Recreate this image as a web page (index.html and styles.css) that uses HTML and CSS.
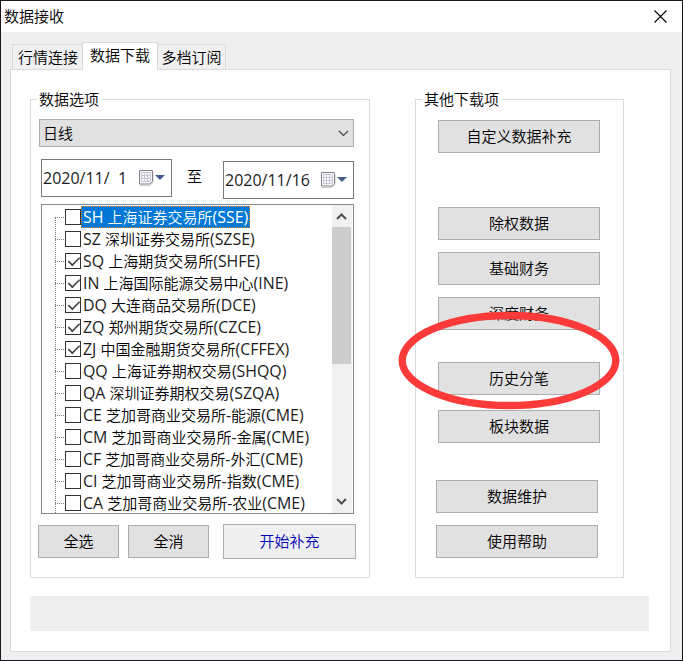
FILE: index.html
```html
<!DOCTYPE html>
<html lang="zh-CN">
<head>
<meta charset="utf-8">
<title>数据接收</title>
<link rel="stylesheet" href="styles.css">
</head>
<body>
<div class="window">
  <header class="titlebar">
    <span>数据接收</span>
    <svg class="close" width="13" height="13" viewBox="0 0 13 13"><path d="M.5.5l12 12M12.5.5l-12 12"/></svg>
  </header>
  <nav class="tabs">
    <div class="tab tab-first">行情连接</div>
    <div class="tab tab-active">数据下载</div>
    <div class="tab tab-last">多档订阅</div>
  </nav>
  <main class="panel">
    <div class="groups">
      <fieldset class="group group-data">
        <legend>数据选项</legend>
        <div class="combo"><span>日线</span><svg width="11" height="7" viewBox="0 0 11 7"><path d="M1 1l4.5 4.5L10 1"/></svg></div>
        <div class="dates">
          <div class="date"><span class="date-text">2020/11/&nbsp; 1</span><svg class="cal" width="27" height="18" viewBox="0 0 27 18"><path class="shadow" d="M2 16.5h10l3-3V3"/><path class="sheet" d="M1.5 1.5h13v11l-2.500 2.500h-10.500z"/><path class="cells" d="M3.500 3.500h9v9h-9zM6.500 3.500v9M9.500 3.500v9M3.500 6.500h9M3.500 9.500h9"/><path class="arrow" d="M17 6h10l-5 5z"/></svg></div>
          <span class="to">至</span>
          <div class="date date-end"><span class="date-text">2020/11/16</span><svg class="cal" width="27" height="18" viewBox="0 0 27 18"><path class="shadow" d="M2 16.500h10l3-3V3"/><path class="sheet" d="M1.500 1.500h13v11l-2.500 2.500h-10.500z"/><path class="cells" d="M3.500 3.500h9v9h-9zM6.500 3.500v9M9.500 3.500v9M3.500 6.500h9M3.500 9.500h9"/><path class="arrow" d="M17 6h10l-5 5z"/></svg></div>
        </div>
        <div class="list">
          <ul class="tree">
            <li><i class="branch first"></i><i class="box"></i><span class="label selected"><b>SH </b>上海证券交易所<b>(SSE)</b></span></li>
            <li><i class="branch"></i><i class="box"></i><span class="label"><b>SZ </b>深圳证券交易所<b>(SZSE)</b></span></li>
            <li><i class="branch"></i><i class="box checked"></i><span class="label"><b>SQ </b>上海期货交易所<b>(SHFE)</b></span></li>
            <li><i class="branch"></i><i class="box checked"></i><span class="label"><b>IN </b>上海国际能源交易中心<b>(INE)</b></span></li>
            <li><i class="branch"></i><i class="box checked"></i><span class="label"><b>DQ </b>大连商品交易所<b>(DCE)</b></span></li>
            <li><i class="branch"></i><i class="box checked"></i><span class="label"><b>ZQ </b>郑州期货交易所<b>(CZCE)</b></span></li>
            <li><i class="branch"></i><i class="box checked"></i><span class="label"><b>ZJ </b>中国金融期货交易所<b>(CFFEX)</b></span></li>
            <li><i class="branch"></i><i class="box"></i><span class="label"><b>QQ </b>上海证券期权交易<b>(SHQQ)</b></span></li>
            <li><i class="branch"></i><i class="box"></i><span class="label"><b>QA </b>深圳证券期权交易<b>(SZQA)</b></span></li>
            <li><i class="branch"></i><i class="box"></i><span class="label"><b>CE </b>芝加哥商业交易所<b>-</b>能源<b>(CME)</b></span></li>
            <li><i class="branch"></i><i class="box"></i><span class="label"><b>CM </b>芝加哥商业交易所<b>-</b>金属<b>(CME)</b></span></li>
            <li><i class="branch"></i><i class="box"></i><span class="label"><b>CF </b>芝加哥商业交易所<b>-</b>外汇<b>(CME)</b></span></li>
            <li><i class="branch"></i><i class="box"></i><span class="label"><b>CI </b>芝加哥商业交易所<b>-</b>指数<b>(CME)</b></span></li>
            <li><i class="branch"></i><i class="box"></i><span class="label"><b>CA </b>芝加哥商业交易所<b>-</b>农业<b>(CME)</b></span></li>
          </ul>
          <div class="scrollbar">
            <svg width="20" height="22" viewBox="0 0 20 22"><path d="M5 14l4.500-4.500L14 14"/></svg>
            <div class="thumb"></div>
            <svg class="down" width="20" height="22" viewBox="0 0 20 22"><path d="M5 8l4.500 4.500L14 8"/></svg>
          </div>
        </div>
        <div class="actions">
          <button class="btn btn-small">全选</button>
          <button class="btn btn-small">全消</button>
          <button class="btn btn-start">开始补充</button>
        </div>
      </fieldset>
      <fieldset class="group group-other">
        <legend>其他下载项</legend>
        <button class="btn custom">自定义数据补充</button>
        <button class="btn">除权数据</button>
        <button class="btn">基础财务</button>
        <button class="btn deep">深度财务</button>
        <button class="btn history">历史分笔</button>
        <button class="btn board">板块数据</button>
        <button class="btn shifted">数据维护</button>
        <button class="btn shifted">使用帮助</button>
      </fieldset>
    </div>
    <div class="status"></div>
  </main>
  <svg class="mark" width="224" height="100" viewBox="0 0 224 100"><ellipse cx="112" cy="50.500" rx="106.800" ry="45"/></svg>
</div>
</body>
</html>
```
FILE: styles.css
```css
* { box-sizing: border-box; }
body {
  margin: 0;
  font: 350 15px/20px "Open Sans", "Noto Sans CJK SC", sans-serif;
  color: #000;
}
b { font-weight: 400; font-size: 15.900px; line-height: 18px; color: #1c1c1c; }
svg { display: block; flex: none; fill: none; }
.window {
  position: relative;
  width: 683px;
  height: 661px;
  border: 1px solid #17161a;
  background: #efefef;
  overflow: hidden;
}
.titlebar {
  height: 31px;
  padding: 0 15px 1px 3px;
  display: flex;
  align-items: center;
  justify-content: space-between;
  background: #fff;
}
.close { stroke: #000; stroke-width: 1.1; }
.tabs {
  display: flex;
  align-items: flex-end;
  height: 37px;
  margin-left: 11px;
}
.tab {
  height: 25px;
  padding-top: 2px;
  border: 1px solid #d9d9d9;
  border-bottom: 0;
  background: #f0f0f0;
  text-align: center;
}
.tab-first { width: 70px; padding-left: 1px; border-right: 0; }
.tab-active {
  position: relative;
  width: 76px;
  height: 28px;
  margin-bottom: -1px;
  background: #fff;
}
.tab-last { width: 68px; border-left: 0; }
.panel {
  width: 661px;
  height: 583px;
  margin-left: 9px;
  padding: 19px;
  border: 1px solid #d9d9d9;
  background: #fff;
}
.groups { display: flex; gap: 45px; }
.group {
  min-width: 0;
  height: 489px;
  margin: 0;
  padding: 0;
  border: 1px solid #dcdcdc;
}
.group-data { width: 340px; }
.group-other { width: 209px; padding-left: 22px; }
legend { height: 21px; padding: 0 2px; margin-left: 6px; white-space: nowrap; }
.group-other legend { margin-left: -16px; }
.combo {
  display: flex;
  align-items: center;
  justify-content: space-between;
  width: 315px;
  height: 28px;
  margin: 9px 0 0 8px;
  padding: 0 4px 0 3px;
  border: 1px solid #adadad;
  background: #e1e1e1;
}
.combo svg { stroke: #444; stroke-width: 1.2; }
.dates { display: flex; align-items: flex-start; margin: 12px 0 0 10px; }
.date {
  display: flex;
  align-items: center;
  justify-content: space-between;
  width: 131px;
  height: 38px;
  padding: 0 6px 0 1px;
  border: 1px solid #7a7a7a;
}
.date-end { margin-top: 2px; }
.date-text { white-space: pre; font-size: 16px; font-weight: 400; color: #1c1c1c; }
.to { width: 51px; padding-top: 7px; padding-right: 6px; text-align: center; }
.shadow { stroke: #d0ccc9; }
.sheet { stroke: #85808a; fill: #f8f7f9; }
.cells { stroke: #c6c9d4; }
.arrow { fill: #445c88; }
.list {
  display: flex;
  justify-content: space-between;
  width: 313px;
  height: 310px;
  margin: 5px 0 0 10px;
  padding-right: 1px;
  border: 1px solid #828790;
  overflow: hidden;
}
.tree { margin: 0; padding: 1px 0 0 13px; list-style: none; }
.tree li { display: flex; height: 22px; white-space: nowrap; }
.branch {
  width: 10px;
  height: 22px;
  background:
    repeating-linear-gradient(90deg, #808080 0 1px, transparent 1px 2px) 0 11px / 9px 1px no-repeat,
    repeating-linear-gradient(#808080 0 1px, transparent 1px 2px) 0 0 / 1px 22px no-repeat;
}
.branch.first {
  background:
    repeating-linear-gradient(90deg, #808080 0 1px, transparent 1px 2px) 0 11px / 9px 1px no-repeat,
    repeating-linear-gradient(#808080 0 1px, transparent 1px 2px) 0 12px / 1px 10px no-repeat;
}
.box { width: 16px; height: 16px; margin-top: 3px; border: 1px solid #333; }
.checked::after {
  content: "";
  display: block;
  width: 12px;
  height: 6px;
  margin: 2px 0 0 1px;
  border: solid #444;
  border-width: 0 0 2px 2px;
  transform: rotate(-45deg) scale(.8);
}
.label { height: 22px; padding: 1px 2px; }
.selected { background: #0078d7; color: #fff; outline: 1px dotted #e6851f; outline-offset: -1px; }
.selected b { color: inherit; }
.scrollbar { width: 20px; background: #f0f0f0; display: flex; flex-direction: column; }
.scrollbar svg { stroke: #505050; stroke-width: 2; }
.scrollbar .down { margin-top: auto; }
.thumb { width: 19px; height: 137px; background: #cdcdcd; }
.actions { display: flex; align-items: center; margin: 10px 0 0 7px; }
.btn {
  display: block;
  width: 162px;
  height: 33px;
  margin: 0 0 12px;
  padding: 0 0 2px;
  border: 1px solid #adadad;
  background: #e1e1e1;
  font: inherit;
  color: inherit;
}
.actions .btn { margin-bottom: 0; }
.btn-small { width: 81px; margin-right: 9px; }
.actions .btn-start {
  width: 133px;
  height: 35px;
  margin-left: 5px;
  background: #efefef;
  color: #0000b4;
}
.custom { margin: 10px 0 54px; }
.deep { margin-bottom: 32px; }
.history { margin-bottom: 15px; }
.board { margin-bottom: 37px; }
.shifted { margin-left: -2px; }
.status { width: 619px; height: 35px; margin-top: 18px; background: #efefef; }
.mark { position: absolute; left: 396px; top: 309px; }
.mark ellipse { stroke: #fc3a3a; stroke-width: 7.300; }
```
